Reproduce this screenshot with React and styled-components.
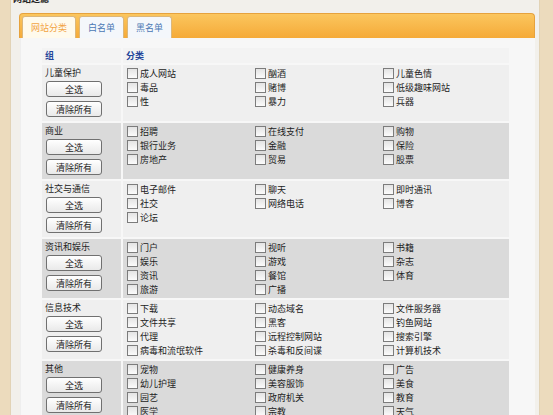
import styled, { createGlobalStyle } from 'styled-components';

const GlobalStyle = createGlobalStyle`
  html, body {
    margin: 0;
    padding: 0;
    background: #ecdbbd;
    overflow: hidden;
  }
  body {
    font-family: "Noto Sans CJK SC", "Noto Sans", sans-serif;
  }
`;

const groups = [
  {
    name: '儿童保护',
    items: ['成人网站', '酗酒', '儿童色情', '毒品', '赌博', '低级趣味网站', '性', '暴力', '兵器']
  },
  {
    name: '商业',
    items: ['招聘', '在线支付', '购物', '银行业务', '金融', '保险', '房地产', '贸易', '股票']
  },
  {
    name: '社交与通信',
    items: ['电子邮件', '聊天', '即时通讯', '社交', '网络电话', '博客', '论坛']
  },
  {
    name: '资讯和娱乐',
    items: ['门户', '视听', '书籍', '娱乐', '游戏', '杂志', '资讯', '餐馆', '体育', '旅游', '广播']
  },
  {
    name: '信息技术',
    items: [
      '下载', '动态域名', '文件服务器',
      '文件共享', '黑客', '钓鱼网站',
      '代理', '远程控制网站', '搜索引擎',
      '病毒和流氓软件', '杀毒和反间谍', '计算机技术'
    ]
  },
  {
    name: '其他',
    items: ['宠物', '健康养身', '广告', '幼儿护理', '美容服饰', '美食', '园艺', '政府机关', '教育', '医学', '宗教', '天气']
  }
];

const tabs = ['网站分类', '白名单', '黑名单'];

const Panel = styled.div`
  margin: -7px 13px 0 10px;
  padding: 0 4px 0 8px;
  height: 430px;
  background: #f2f0eb;
  border-left: 1px solid #e2d3b6;
  border-right: 1px solid #e2d3b6;
`;

const Title = styled.div`
  height: 15px;
  line-height: 12px;
  margin-left: -6px;
  font-size: 9px;
  font-weight: bold;
  color: #222;
`;

const Frame = styled.div`
  margin-top: 5px;
`;

const TabBar = styled.div`
  display: flex;
  align-items: flex-end;
  gap: 3px;
  height: 22px;
  padding: 2px 0 0 2px;
  border: 1px solid #e6a23d;
  border-bottom: none;
  border-radius: 4px 4px 0 0;
  background: linear-gradient(#fbc65e, #f5aa38);
`;

const Tab = styled.div`
  height: 21px;
  line-height: 21px;
  padding: 0 8px;
  font-size: 9px;
  border: 1px solid #dcb77a;
  border-bottom: none;
  border-radius: 3px 3px 0 0;
  background: ${({ $active }) => ($active ? '#fffaec' : '#f4f7fb')};
  color: ${({ $active }) => ($active ? '#f2a444' : '#4b78b4')};
`;

const Content = styled.div`
  background: #f7f7f7;
  margin-left: 1px;
  padding: 10px 26px 0 21px;
  height: 400px;
  border-left: 1px solid #eee;
`;

const Table = styled.div`
  display: flex;
  flex-direction: column;
  gap: 2px;
`;

const Row = styled.div`
  display: grid;
  grid-template-columns: 79px 386px;
  column-gap: 2px;
`;

const Cell = styled.div`
  background: ${({ $dark }) => ($dark ? '#dadada' : '#efefef')};
`;

const HeadCell = styled.div`
  height: 15px;
  line-height: 15px;
  padding-left: 3px;
  font-size: 9px;
  font-weight: bold;
  color: #24459a;
  background: #f3f3f3;
`;

const GroupCell = styled(Cell)`
  display: flex;
  flex-direction: column;
  align-items: flex-start;
  padding: 1px 0 4px 3px;
`;

const GroupName = styled.div`
  height: 14px;
  line-height: 14px;
  font-size: 9px;
  color: #222;
  margin-bottom: 1px;
`;

const Button = styled.button`
  width: 56px;
  height: 16px;
  margin: 0 0 4px 1px;
  padding: 0;
  font-family: inherit;
  font-size: 9px;
  color: #222;
  border: 1px solid #707070;
  border-radius: 3px;
  background: linear-gradient(#ffffff, #e9e9e9);
  &:last-child {
    margin-bottom: 0;
  }
`;

const ItemGrid = styled(Cell)`
  display: grid;
  grid-template-columns: repeat(3, 128px);
  grid-auto-rows: 14.25px;
  align-content: start;
  padding: 1px 0 1px 4px;
`;

const Item = styled.label`
  display: flex;
  align-items: center;
  gap: 2px;
  font-size: 9px;
  color: #222;
  white-space: nowrap;
`;

const Box = styled.span`
  width: 9px;
  height: 9px;
  border: 1px solid #7c7c7c;
  background: linear-gradient(#e4e4e4, #fbfbfb);
  flex-shrink: 0;
`;

export default function App() {
  return (
    <>
      <GlobalStyle />
      <Panel>
        <Title>网站过滤</Title>
        <Frame>
          <TabBar>
            {tabs.map((t, i) => (
              <Tab key={t} $active={i === 0}>{t}</Tab>
            ))}
          </TabBar>
          <Content>
            <Table>
              <Row>
                <HeadCell>组</HeadCell>
                <HeadCell>分类</HeadCell>
              </Row>
              {groups.map((g, i) => (
                <Row key={g.name}>
                  <GroupCell $dark={i % 2 === 1}>
                    <GroupName>{g.name}</GroupName>
                    <Button>全选</Button>
                    <Button>清除所有</Button>
                  </GroupCell>
                  <ItemGrid $dark={i % 2 === 1}>
                    {g.items.map((it) => (
                      <Item key={it}>
                        <Box />
                        {it}
                      </Item>
                    ))}
                  </ItemGrid>
                </Row>
              ))}
            </Table>
          </Content>
        </Frame>
      </Panel>
    </>
  );
}
